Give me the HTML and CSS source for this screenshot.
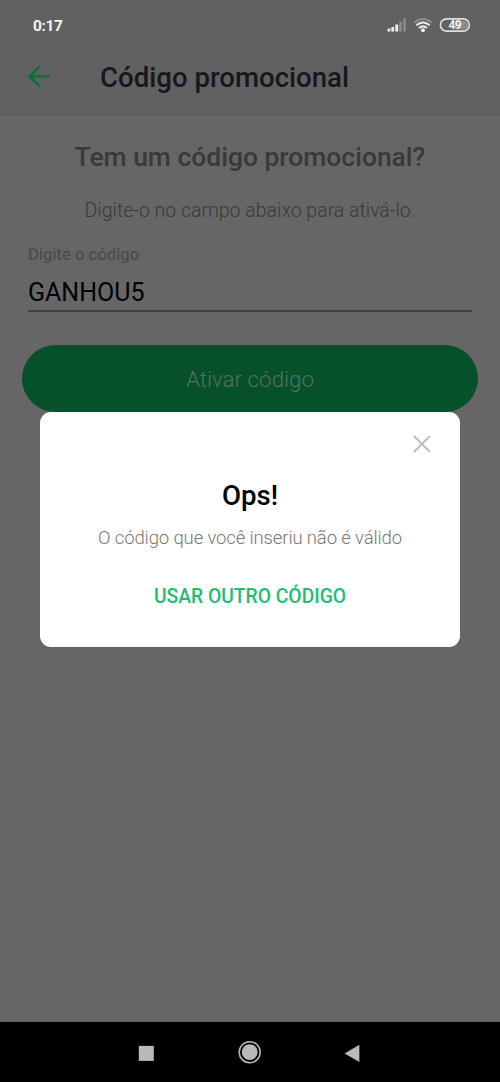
FILE: index.html
```html
<!DOCTYPE html>
<html lang="pt-BR">
<head>
<meta charset="utf-8">
<meta name="viewport" content="width=device-width">
<title>Código promocional</title>
<link rel="stylesheet" href="styles.css">
</head>
<body>
<div class="screen">
  <header class="top">
    <div class="status">
      <span class="clock">0:17</span>
      <svg class="indicators" width="84" height="18" viewBox="0 0 84 18">
        <g fill="#ededed">
          <path d="M0.8 11.5h2.5v3H0.3z"/><rect x="4.3" y="10" width="2.8" height="4.5"/><rect x="8.3" y="7.5" width="2.8" height="7"/>
        </g>
        <g fill="#8c8c8c"><rect x="12.2" y="4.5" width="2.6" height="10"/><rect x="16.2" y="1.2" width="2.6" height="13.3"/></g>
        <g fill="none" stroke-width="2">
          <path d="M27.3 5.6Q36 -1.4 44.7 5.6" stroke="#8c8c8c"/>
          <path d="M29.4 8.3Q36 2.6 42.6 8.3" stroke="#ededed"/>
          <path d="M32 11Q36 7.8 40 11" stroke="#ededed"/>
        </g>
        <circle cx="36" cy="13.2" r="2" fill="#ededed"/>
        <path d="M68 3.8h9a4 4 0 0 1 0 8.7h-9z" fill="#8c8c8c"/>
        <rect x="53.4" y="1.9" width="29" height="12.2" rx="6.1" fill="none" stroke="#dedede" stroke-width="1.6"/>
        <text class="battery" x="67.8" y="12.1" text-anchor="middle">49</text>
      </svg>
    </div>
    <div class="appbar">
      <svg class="back" width="24" height="24" viewBox="0 0 24 24"><path d="M23 11.4H2M12.8 1.4L2.6 11.4L12.8 21.4"/></svg>
      <h1 class="title">Código promocional</h1>
    </div>
  </header>
  <main class="content">
    <h2 class="question">Tem um código promocional?</h2>
    <p class="hint">Digite-o no campo abaixo para ativá-lo.</p>
    <div class="field">
      <div class="label">Digite o código</div>
      <div class="value">GANHOU5</div>
    </div>
    <div class="submit">Ativar código</div>
  </main>
  <nav class="navbar">
    <svg width="500" height="60" viewBox="0 0 500 60" fill="#b9b9b9">
      <rect x="138.8" y="23.9" width="15" height="15"/>
      <circle cx="249.7" cy="30.2" r="7.9"/>
      <circle cx="249.7" cy="30.2" r="10.5" fill="none" stroke="#b9b9b9" stroke-width="1.5"/>
      <path d="M344.6 31.4L359.4 22.8V40z"/>
    </svg>
  </nav>
  <section class="dialog">
    <svg class="close" width="18" height="18" viewBox="0 0 18 18"><path d="M1 1L17 17M17 1L1 17"/></svg>
    <h3 class="dialog-title">Ops!</h3>
    <p class="message">O código que você inseriu não é válido</p>
    <div class="action">USAR OUTRO CÓDIGO</div>
  </section>
</div>
</body>
</html>
```
FILE: styles.css
```css
* { box-sizing: border-box; }
body, h1, h2, h3, p { margin: 0; }
body { font-family: Roboto, sans-serif; background: #666; }
.screen {
  position: relative;
  display: flex;
  flex-direction: column;
  width: 500px;
  height: 1082px;
  overflow: hidden;
  background: #666;
}
.top {
  height: 116px;
  background: #616161;
  border-bottom: 2px solid #5d5d66;
}
.status {
  display: flex;
  justify-content: space-between;
  height: 50px;
  padding: 17px 29px 0 33px;
}
.clock { font-size: 15.5px; line-height: 18px; font-weight: 700; color: #f2f2f2; letter-spacing: -0.4px; }
.battery { font: 700 12px Roboto, sans-serif; fill: #f2f2f2; letter-spacing: -0.5px; }
.appbar { display: flex; align-items: flex-start; padding: 0 27px; gap: 49px; }
.back { margin-top: 15px; fill: none; stroke: #087036; stroke-width: 2.4; }
.title { padding-top: 12px; font-size: 27.6px; line-height: 32px; font-weight: 500; color: #17171f; white-space: nowrap; }
.content { flex: 1; display: flex; flex-direction: column; padding: 25px 22px 0; }
.question { text-align: center; font-size: 26.45px; line-height: 32px; font-weight: 500; color: #393939; white-space: nowrap; }
.hint { margin-top: 26px; text-align: center; font-size: 19.5px; line-height: 24px; font-weight: 300; color: #393939; white-space: nowrap; }
.field { margin: 22px 6px 0; padding-bottom: 1px; border-bottom: 2px solid #414141; }
.label { font-size: 16.7px; line-height: 20px; color: #484848; }
.value { margin-top: 12px; font-size: 25px; line-height: 32px; color: #000; }
.submit {
  height: 67px;
  margin-top: 33px;
  border-radius: 34px;
  background: #06502a;
  text-align: center;
  font-size: 22.4px;
  line-height: 68px;
  font-weight: 300;
  color: #53715f;
}
.navbar { height: 60px; background: #000; }
.navbar svg { display: block; }
.dialog {
  position: absolute;
  left: 40px;
  top: 412px;
  width: 420px;
  height: 235px;
  display: flex;
  flex-direction: column;
  align-items: center;
  padding-top: 23px;
  border-radius: 11px;
  background: #fff;
  white-space: nowrap;
}
.close { align-self: flex-end; margin-right: 29px; fill: none; stroke: #bdbdbd; stroke-width: 1.8; }
.dialog-title { margin-top: 27px; font-size: 27.6px; line-height: 32px; font-weight: 500; color: #000; }
.message { margin-top: 14px; font-size: 18.5px; line-height: 24px; font-weight: 300; color: #777; letter-spacing: -0.13px; }
.action { margin-top: 35px; font-size: 19.3px; line-height: 24px; font-weight: 500; color: #20bd72; }
```
